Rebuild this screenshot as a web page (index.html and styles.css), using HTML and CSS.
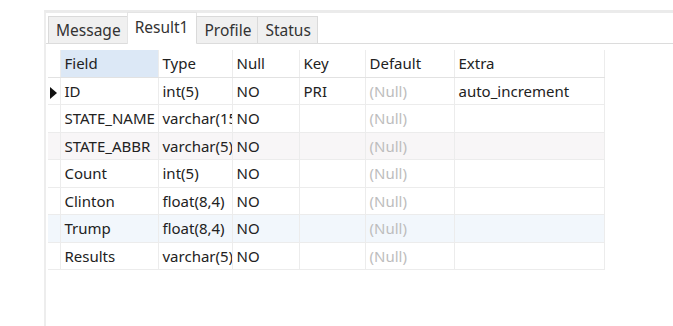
FILE: index.html
```html
<!DOCTYPE html>
<html lang="en">
<head>
    <meta charset="UTF-8">
    <title>Result1</title>
    <link rel="stylesheet" href="styles.css">
</head>
<body>
    <div class="panel">
        <ul class="tabs">
            <li class="tab">Message</li>
            <li class="tab active">Result1</li>
            <li class="tab">Profile</li>
            <li class="tab">Status</li>
        </ul>

        <table class="grid">
            <colgroup>
                <col class="c-ind">
                <col class="c-field">
                <col class="c-type">
                <col class="c-null">
                <col class="c-key">
                <col class="c-default">
                <col class="c-extra">
            </colgroup>
            <thead>
                <tr>
                    <th class="ind"></th>
                    <th class="sorted">Field</th>
                    <th>Type</th>
                    <th>Null</th>
                    <th>Key</th>
                    <th>Default</th>
                    <th>Extra</th>
                </tr>
            </thead>
            <tbody>
                <tr>
                    <td class="ind"><span class="arrow"></span></td>
                    <td>ID</td>
                    <td>int(5)</td>
                    <td>NO</td>
                    <td>PRI</td>
                    <td class="null">(Null)</td>
                    <td>auto_increment</td>
                </tr>
                <tr>
                    <td class="ind"></td>
                    <td>STATE_NAME</td>
                    <td>varchar(15)</td>
                    <td>NO</td>
                    <td></td>
                    <td class="null">(Null)</td>
                    <td></td>
                </tr>
                <tr class="alt">
                    <td class="ind"></td>
                    <td>STATE_ABBR</td>
                    <td>varchar(5)</td>
                    <td>NO</td>
                    <td></td>
                    <td class="null">(Null)</td>
                    <td></td>
                </tr>
                <tr>
                    <td class="ind"></td>
                    <td>Count</td>
                    <td>int(5)</td>
                    <td>NO</td>
                    <td></td>
                    <td class="null">(Null)</td>
                    <td></td>
                </tr>
                <tr>
                    <td class="ind"></td>
                    <td>Clinton</td>
                    <td>float(8,4)</td>
                    <td>NO</td>
                    <td></td>
                    <td class="null">(Null)</td>
                    <td></td>
                </tr>
                <tr class="hover">
                    <td class="ind"></td>
                    <td>Trump</td>
                    <td>float(8,4)</td>
                    <td>NO</td>
                    <td></td>
                    <td class="null">(Null)</td>
                    <td></td>
                </tr>
                <tr>
                    <td class="ind"></td>
                    <td>Results</td>
                    <td>varchar(5)</td>
                    <td>NO</td>
                    <td></td>
                    <td class="null">(Null)</td>
                    <td></td>
                </tr>
            </tbody>
        </table>
    </div>
</body>
</html>
```

FILE: styles.css
```css
* {
    margin: 0;
    padding: 0;
    box-sizing: border-box;
}

body {
    font-family: "Noto Sans", Arial, sans-serif;
    font-size: 15px;
    color: #222;
    background-color: #fff;
    padding-left: 44px;
    padding-top: 10px;
    height: 326px;
    overflow: hidden;
}

.panel {
    border-top: 3px solid #ebebeb;
    border-left: 2px solid #ededed;
    height: 316px;
}

/* Tab strip */
.tabs {
    list-style: none;
    display: flex;
    align-items: flex-end;
    padding-left: 3px;
    height: 31px;
    border-bottom: 1px solid #dcdcdc;
}

.tab {
    height: 27px;
    line-height: 26px;
    padding: 0 6px 0 7px;
    background-color: #f0f0f0;
    border: 1px solid #dadada;
    border-bottom: none;
    margin-left: -1px;
    color: #333;
    font-size: 15.5px;
}

.tab.active {
    height: 32px;
    line-height: 28px;
    background-color: #fff;
    margin-bottom: -1px;
    padding: 0 8px 0 7px;
    border-color: #e4e4e4;
}

/* Result grid */
.grid {
    margin-top: 6px;
    margin-left: 2px;
    border-collapse: collapse;
    table-layout: fixed;
    width: 556px;
}

.c-ind { width: 12px; }
.c-field { width: 98px; }
.c-type { width: 74px; }
.c-null { width: 67px; }
.c-key { width: 66px; }
.c-default { width: 89px; }
.c-extra { width: 150px; }

.grid th,
.grid td {
    height: 27.5px;
    padding: 0 0 0 4px;
    text-align: left;
    font-weight: normal;
    white-space: nowrap;
    overflow: hidden;
    text-overflow: clip;
    border: 1px solid #ececec;
}

.grid th {
    height: 27px;
    border-top: none;
    border-bottom-color: #e2e2e2;
}

.grid .ind {
    padding: 0;
    border-left: none;
    text-align: center;
}

.grid th.sorted {
    background-color: #dce8f6;
}

.grid td.null {
    color: #bdbdbd;
}

.grid tr.alt td {
    background-color: #f8f6f7;
}

.grid tr.hover td {
    background-color: #f2f7fc;
}

.arrow {
    display: inline-block;
    width: 0;
    height: 0;
    border-top: 6px solid transparent;
    border-bottom: 6px solid transparent;
    border-left: 7px solid #111;
    vertical-align: middle;
}
```
